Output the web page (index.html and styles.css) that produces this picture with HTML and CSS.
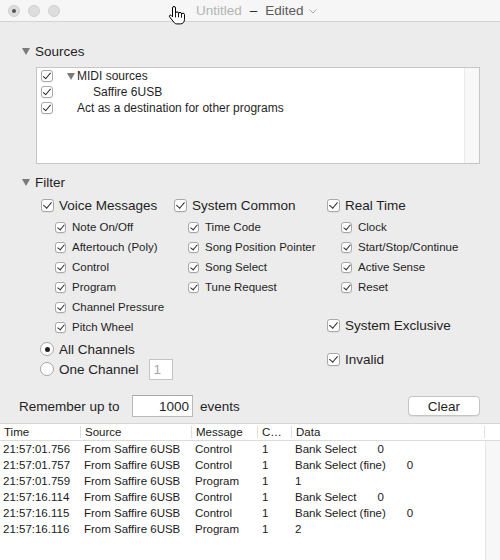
FILE: index.html
```html
<!DOCTYPE html>
<html>
<head>
<meta charset="utf-8">
<title>MIDI Monitor</title>
<link rel="stylesheet" href="styles.css">
</head>
<body>
<div class="window">
  <header class="titlebar">
    <div class="lights">
      <span class="light close"></span>
      <span class="light"></span>
      <span class="light"></span>
    </div>
    <div class="title">
      <span class="doc">Untitled</span>
      <span class="dash">–</span>
      <span class="edited">Edited</span>
      <svg class="chev" width="8" height="5" viewBox="0 0 8 5"><polyline points="0.5,0.5 4,4 7.5,0.5" fill="none" stroke="#aaaaaa" stroke-width="1"/></svg>
    </div>
    <svg class="cursor" width="18" height="20" viewBox="0 0 18 20">
      <path d="M4.5 2a1.5 1.5 0 0 1 3 0V7.4a1.5 1.5 0 0 1 3 0v.5a1.5 1.5 0 0 1 3 0v.8a1.5 1.5 0 0 1 3 0V13.3c0 2.6-1.6 4.6-4 4.6H8.8c-1.3 0-2.2-.6-2.9-1.6L1.5 10.8c-.7-1 .6-2.3 1.6-1.4l1.4 1.4Z" fill="#fff" stroke="#000" stroke-width="1" stroke-linejoin="round"/>
      <path d="M7.5 7.4v4M10.5 7.9v3.5M13.5 8.7v3" stroke="#000" stroke-width="0.9" fill="none"/>
    </svg>
  </header>

  <section class="sources">
    <div class="disclosure"><span class="tri"></span>Sources</div>
    <div class="listbox">
      <div class="list">
        <div class="lrow"><span class="cb md"></span><span class="tri sm"></span>MIDI sources</div>
        <div class="lrow"><span class="cb md"></span><span class="ind2">Saffire 6USB</span></div>
        <div class="lrow"><span class="cb md"></span><span class="ind1">Act as a destination for other programs</span></div>
      </div>
      <div class="lscroll"></div>
    </div>
  </section>

  <section class="filter">
    <div class="disclosure"><span class="tri"></span>Filter</div>
    <div class="filter-body">
      <div class="left">
        <div class="cols">
          <div class="col col1">
            <div class="hrow"><span class="cb"></span>Voice Messages</div>
            <div class="subs">
              <div class="srow"><span class="cb sm"></span>Note On/Off</div>
              <div class="srow"><span class="cb sm"></span>Aftertouch (Poly)</div>
              <div class="srow"><span class="cb sm"></span>Control</div>
              <div class="srow"><span class="cb sm"></span>Program</div>
              <div class="srow"><span class="cb sm"></span>Channel Pressure</div>
              <div class="srow"><span class="cb sm"></span>Pitch Wheel</div>
            </div>
          </div>
          <div class="col col2">
            <div class="hrow"><span class="cb"></span>System Common</div>
            <div class="subs">
              <div class="srow"><span class="cb sm"></span>Time Code</div>
              <div class="srow"><span class="cb sm"></span>Song Position Pointer</div>
              <div class="srow"><span class="cb sm"></span>Song Select</div>
              <div class="srow"><span class="cb sm"></span>Tune Request</div>
            </div>
          </div>
        </div>
        <div class="radios">
          <div class="rrow"><span class="radio on"></span>All Channels</div>
          <div class="rrow"><span class="radio"></span>One Channel<span class="chfield">1</span></div>
        </div>
      </div>
      <div class="col col3">
        <div class="hrow"><span class="cb"></span>Real Time</div>
        <div class="subs">
          <div class="srow"><span class="cb sm"></span>Clock</div>
          <div class="srow"><span class="cb sm"></span>Start/Stop/Continue</div>
          <div class="srow"><span class="cb sm"></span>Active Sense</div>
          <div class="srow"><span class="cb sm"></span>Reset</div>
        </div>
        <div class="hrow sysex"><span class="cb"></span>System Exclusive</div>
        <div class="hrow invalid"><span class="cb"></span>Invalid</div>
      </div>
    </div>
  </section>

  <div class="remember">
    <span class="rlabel">Remember up to</span>
    <span class="field">1000</span>
    <span class="events">events</span>
    <span class="btn">Clear</span>
  </div>

  <section class="table">
    <div class="thead">
      <span class="th">Time</span>
      <span class="th">Source</span>
      <span class="th">Message</span>
      <span class="th">C…</span>
      <span class="th">Data</span>
      <span class="th"></span>
    </div>
    <div class="tbody">
      <div class="rows">
        <div class="tr"><span class="td">21:57:01.756</span><span class="td">From Saffire 6USB</span><span class="td">Control</span><span class="td ch">1</span><span class="td">Bank Select<span class="val">0</span></span></div>
        <div class="tr"><span class="td">21:57:01.757</span><span class="td">From Saffire 6USB</span><span class="td">Control</span><span class="td ch">1</span><span class="td">Bank Select (fine)<span class="val">0</span></span></div>
        <div class="tr"><span class="td">21:57:01.759</span><span class="td">From Saffire 6USB</span><span class="td">Program</span><span class="td ch">1</span><span class="td">1</span></div>
        <div class="tr"><span class="td">21:57:16.114</span><span class="td">From Saffire 6USB</span><span class="td">Control</span><span class="td ch">1</span><span class="td">Bank Select<span class="val">0</span></span></div>
        <div class="tr"><span class="td">21:57:16.115</span><span class="td">From Saffire 6USB</span><span class="td">Control</span><span class="td ch">1</span><span class="td">Bank Select (fine)<span class="val">0</span></span></div>
        <div class="tr"><span class="td">21:57:16.116</span><span class="td">From Saffire 6USB</span><span class="td">Program</span><span class="td ch">1</span><span class="td">2</span></div>
      </div>
      <div class="vtrack"></div>
    </div>
  </section>
</div>
</body>
</html>
```

FILE: styles.css
```css
* { box-sizing: border-box; }
html, body { margin: 0; padding: 0; }
body {
  width: 500px;
  height: 560px;
  overflow: hidden;
  background: #ececec;
  font-family: "Liberation Sans", Arial, sans-serif;
  font-size: 13.5px;
  color: #1f1f1f;
}
.window {
  height: 560px;
  display: flex;
  flex-direction: column;
}

/* title bar */
.titlebar {
  flex: none;
  height: 22px;
  background: #f6f6f6;
  border-bottom: 1px solid #d3d3d3;
  display: flex;
  align-items: center;
  position: relative;
}
.lights { display: flex; gap: 8px; padding-left: 8px; }
.light {
  width: 12px; height: 12px; border-radius: 50%;
  background: #dddddd; border: 1px solid #d0d0d0;
  display: flex; align-items: center; justify-content: center;
}
.light.close::after {
  content: ""; width: 4px; height: 4px; border-radius: 50%; background: #555;
}
.title {
  margin-left: 136px;
  display: flex; align-items: center;
  font-size: 13.5px; line-height: 16px;
}
.title .doc { color: #b4b4b4; }
.title .dash { color: #222; margin: 0 8px; }
.title .edited { color: #5a5a5a; }
.title .chev { margin-left: 5px; margin-top: 1px; }
.cursor { position: absolute; left: 168px; top: 6px; }

/* disclosure headings */
.disclosure {
  display: flex; align-items: center;
  height: 16px; padding-left: 22px;
}
.tri {
  flex: none; width: 0; height: 0;
  border-left: 4px solid transparent;
  border-right: 4px solid transparent;
  border-top: 7px solid #7a7a7a;
  margin-right: 5px;
}
.sources .disclosure { margin-top: 21px; }

/* sources list */
.listbox {
  margin: 8px 20px 0 36px;
  height: 97px;
  border: 1px solid #c6c6c6;
  background: #fff;
  display: flex;
}
.list { flex: 1; padding-left: 4px; }
.lrow { height: 16px; display: flex; align-items: center; font-size: 12px; }
.lrow .tri.sm { margin-left: 9px; margin-right: 2px; }
.ind1 { margin-left: 19px; }
.ind2 { margin-left: 35px; }
.lscroll { width: 15px; background: #f8f8f8; border-left: 1px solid #ebebeb; }

/* checkboxes */
.cb {
  flex: none;
  width: 13px; height: 13px;
  margin-right: 5px;
  display: inline-flex; align-items: center; justify-content: center;
  background: #fff;
  border: 1px solid #a8a8a8;
  border-radius: 3px;
  box-shadow: 0 1px 0 rgba(0,0,0,0.05);
}
.cb::after {
  content: "";
  width: 3.5px; height: 7px;
  border: solid #2a2a2a;
  border-width: 0 1.6px 1.6px 0;
  transform: translate(0, -1px) rotate(40deg);
}
.cb.md { width: 12px; height: 12px; }
.cb.md::after { width: 3px; height: 6.5px; }
.cb.sm { width: 11px; height: 11px; margin-right: 6px; }
.cb.sm::after { width: 3px; height: 6px; border-width: 0 1.4px 1.4px 0; }

/* filter */
.filter .disclosure { margin-top: 10px; }
.filter-body { display: flex; margin-top: 5px; padding-left: 41px; }
.left { width: 286px; flex: none; }
.cols { display: flex; }
.col1 { width: 133px; flex: none; }
.col2 { width: 153px; flex: none; }
.hrow { height: 20px; display: flex; align-items: center; font-size: 13.5px; }
.subs { margin-top: 2px; padding-left: 14px; }
.srow { height: 20px; display: flex; align-items: center; font-size: 11.5px; }
.sysex { margin-top: 18px; }
.invalid { margin-top: 14px; }

.radios { margin-top: 2px; margin-left: -1px; }
.rrow { height: 20px; display: flex; align-items: center; font-size: 13.5px; }
.radio {
  flex: none;
  width: 14px; height: 14px; border-radius: 50%;
  background: #fff; border: 1px solid #a6a6a6;
  margin-right: 5px;
  display: inline-flex; align-items: center; justify-content: center;
}
.radio.on::after {
  content: ""; width: 5px; height: 5px; border-radius: 50%; background: #222;
}
.chfield {
  margin-left: 10px;
  width: 24px; height: 21px;
  background: #fff;
  border: 1px solid #c4c4c4;
  color: #a5a5a5;
  padding-left: 4px;
  display: flex; align-items: center;
}

/* remember row */
.remember {
  display: flex; align-items: center;
  height: 22px; margin-top: 16px;
  padding: 0 20px 0 19px;
}
.rlabel { width: 113px; flex: none; }
.field {
  width: 61px; height: 22px; flex: none;
  background: #fff;
  border: 1px solid #b8b8b8;
  border-top-color: #a8a8a8;
  display: flex; align-items: center; justify-content: flex-end;
  padding-right: 3px;
}
.events { margin-left: 7px; }
.btn {
  margin-left: auto;
  width: 72px; height: 20px;
  background: #fff;
  border: 1px solid #c4c4c4;
  border-radius: 4px;
  box-shadow: 0 1px 0 rgba(0,0,0,0.06);
  display: flex; align-items: center; justify-content: center;
}

/* table */
.table {
  flex: 1;
  display: flex; flex-direction: column;
  margin-top: 6px;
  background: #fff;
  border-top: 1px solid #d6d6d6;
  font-size: 11.5px;
  color: #1a1a1a;
}
.thead {
  flex: none;
  height: 17px;
  display: grid;
  grid-template-columns: 80px 111px 66px 34px 193px 16px;
  align-items: center;
  border-bottom: 1px solid #dcdcdc;
}
.th {
  height: 12px; line-height: 12px;
  padding-left: 4px;
  border-left: 1px solid #e0e0e0;
  white-space: nowrap;
}
.th:first-child { border-left: 0; }
.tbody { flex: 1; display: flex; }
.rows { width: 485px; flex: none; }
.tr {
  display: grid;
  grid-template-columns: 80px 111px 66px 34px 194px;
  height: 16px;
  align-items: center;
}
.td { padding-left: 4px; white-space: nowrap; }
.td:first-child { padding-left: 3px; }
.td.ch { padding-left: 5px; }
.val { margin-left: 21px; }
.vtrack { flex: 1; background: #f7f7f7; border-left: 1px solid #e6e6e6; }
```
